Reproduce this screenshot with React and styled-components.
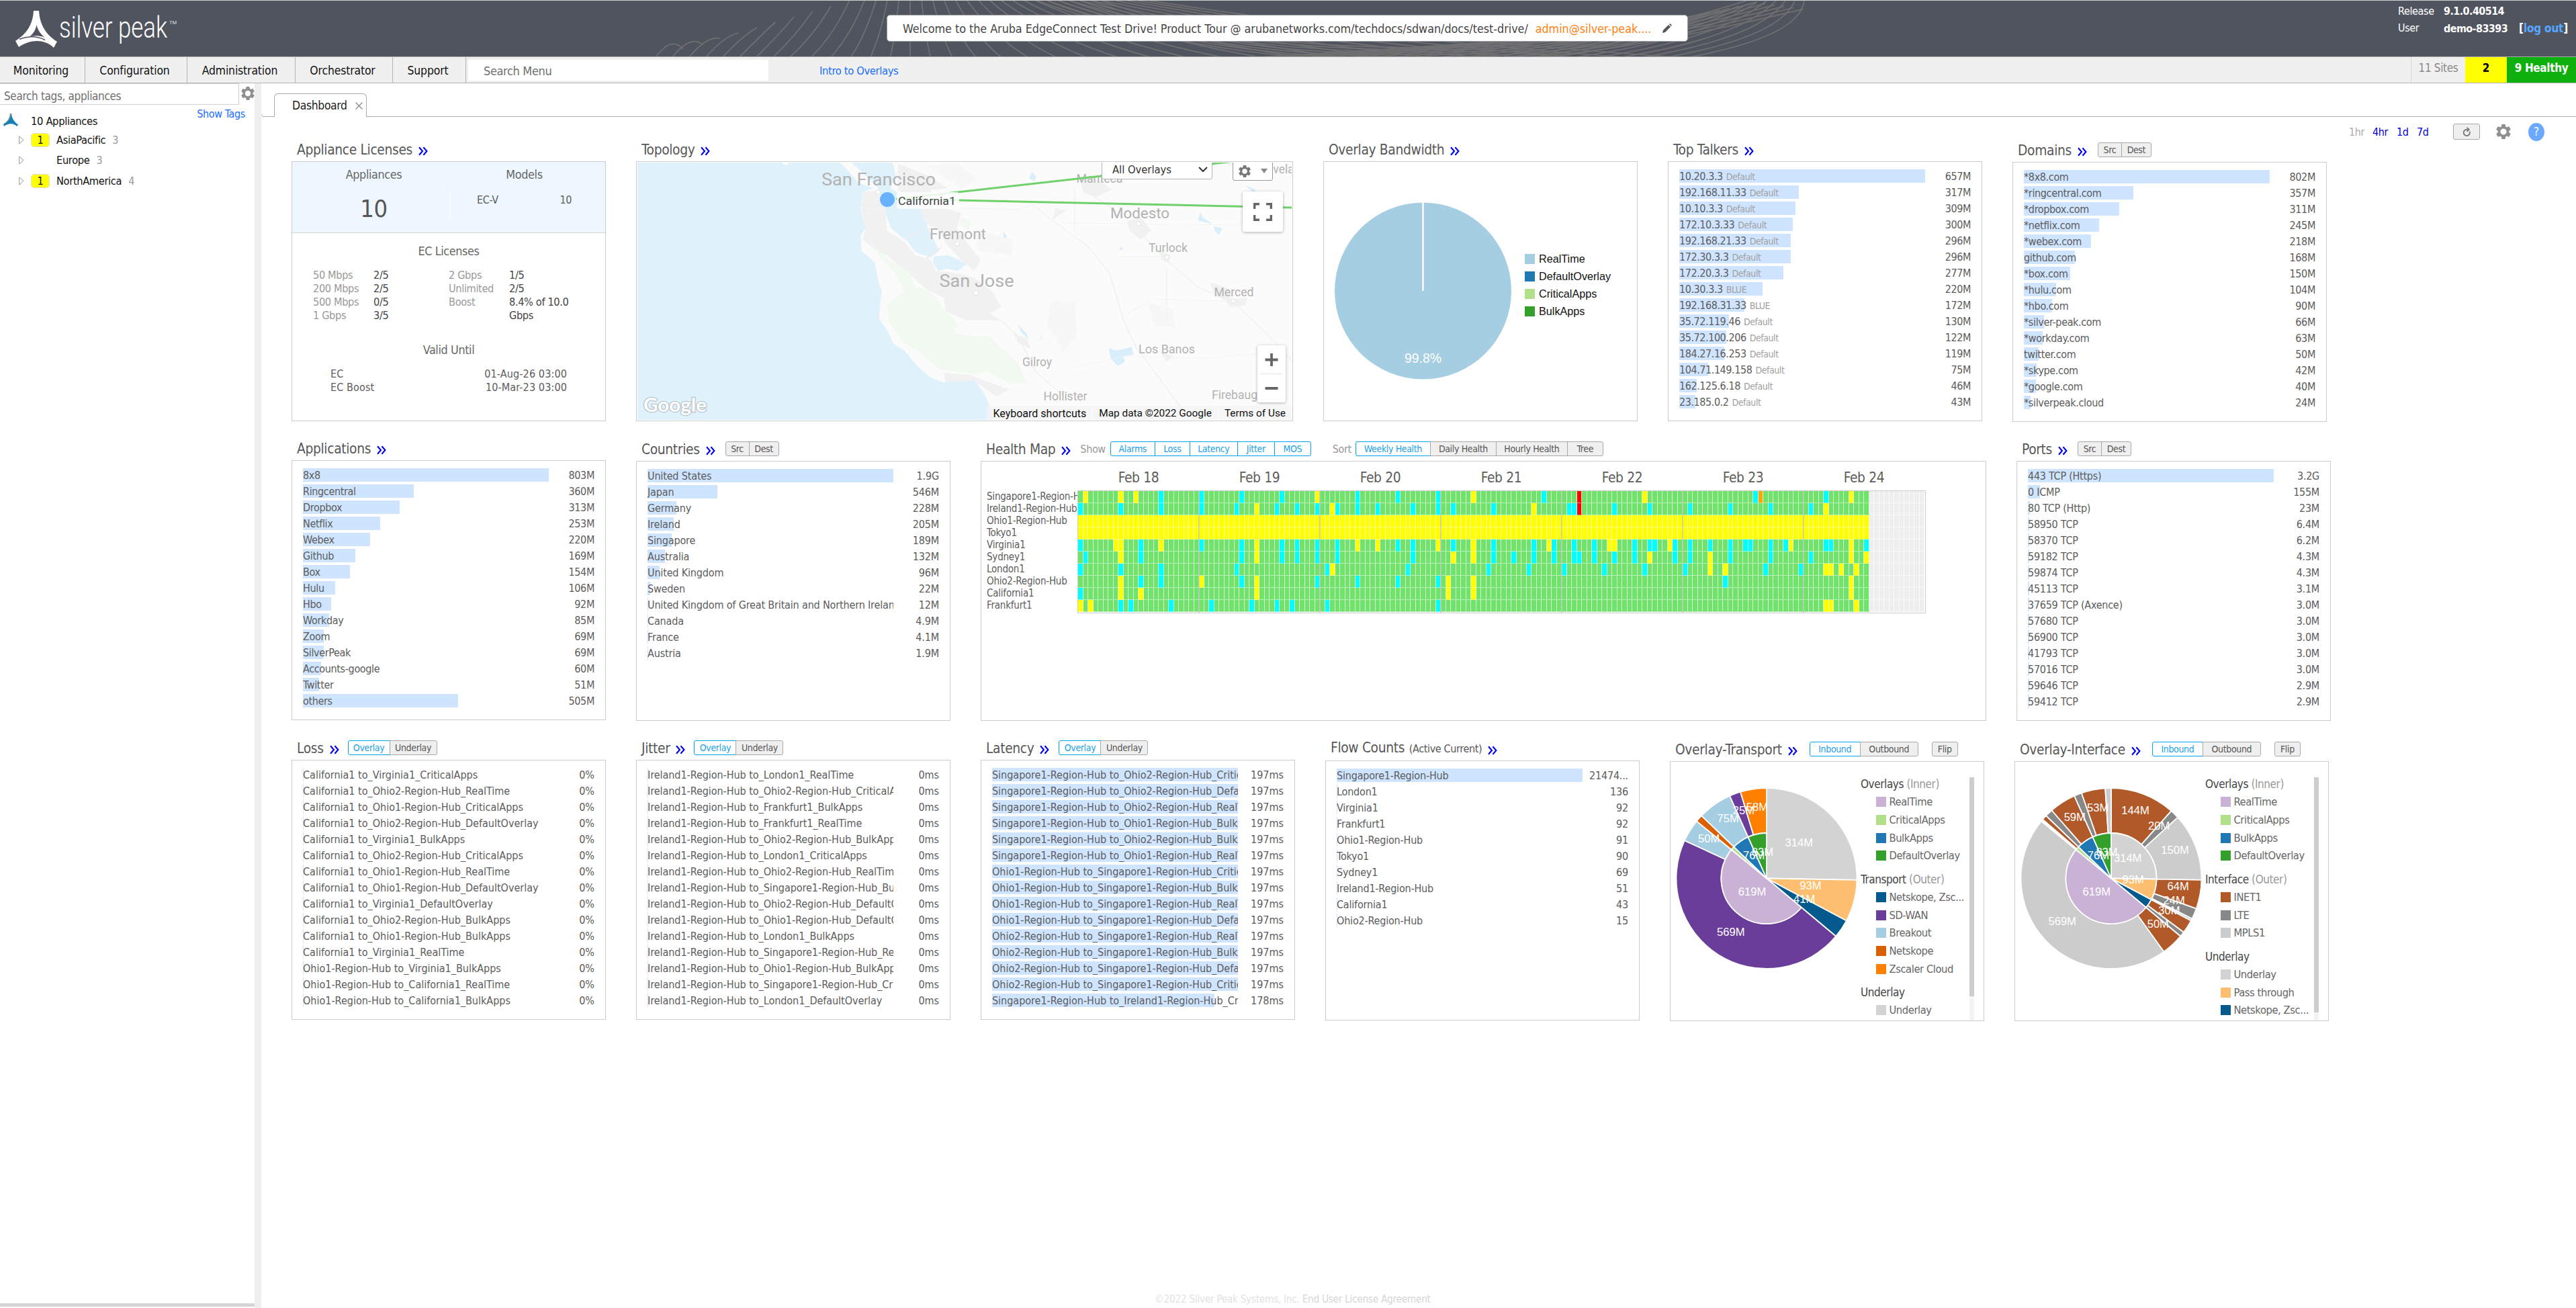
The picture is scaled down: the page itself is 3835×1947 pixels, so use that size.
import React from "react";
import styled, { createGlobalStyle, css } from "styled-components";

const ui = `"DejaVu Sans Condensed", "DejaVu Sans", sans-serif`;
const arial = `"Liberation Sans", Arial, sans-serif`;
const roboto = `Roboto, "Liberation Sans", sans-serif`;

const GlobalStyle = createGlobalStyle`
  * { box-sizing: border-box; }
  html, body { margin: 0; padding: 0; background: #fff; }
  body {
    font-family: ${ui};
    font-stretch: condensed;
    font-size: 16px;
    letter-spacing: -0.022em;
    color: #5c5c5c;
    overflow: hidden;
  }
  svg text { font-stretch: normal; letter-spacing: 0; }
`;

const Page = styled.div`
  width: 3835px;
  height: 1947px;
  display: flex;
  flex-direction: column;
  overflow: hidden;
`;

/* ---------- header ---------- */
const Header = styled.header`
  flex: none;
  height: 85px;
  position: relative;
  display: flex;
  justify-content: space-between;
  background: #50545f;
  border-top: 1px solid #cdd5d2;
  border-bottom: 1px solid #a9a9a9;
`;
const Mesh = styled.svg`
  position: absolute;
  left: 960px;
  top: 0;
`;
const LogoArea = styled.div`
  width: 1320px;
  padding: 14px 0 0 22px;
`;
const Banner = styled.div`
  position: relative;
  width: 1193px;
  height: 40px;
  margin-top: 21px;
  padding: 0 23px;
  display: flex;
  align-items: center;
  background: #fff;
  border: 1px solid #9a9da3;
  border-radius: 5px;
  color: #444;
  font-size: 17.8px;
  letter-spacing: -0.03px;
  white-space: nowrap;
`;
const BannerText = styled.span`
  width: 945px;
`;
const BannerMail = styled.span`
  color: #ff7f11;
  width: 190px;
  font-size: 17.8px;
`;
const Account = styled.div`
  width: 1322px;
  padding: 3px 0 0 1057px;
  display: grid;
  grid-template-columns: 68px 1fr;
  grid-auto-rows: 25px;
  align-items: center;
  align-content: start;
  color: #fff;
  white-space: nowrap;
`;
const Strong = styled.b`
  letter-spacing: -0.037em;
  a { color: #56a7ff; }
  span { margin-left: 17px; font-size: 17px; letter-spacing: -0.012em; }
`;

/* ---------- nav ---------- */
const Nav = styled.nav`
  flex: none;
  height: 39px;
  display: flex;
  background: #f0f0f0;
  border-bottom: 1px solid #b4b4b4;
  color: #111;
`;
const NavItem = styled.div`
  width: ${(p) => p.$w}px;
  padding: 2px 4px 0 0;
  display: flex;
  align-items: center;
  justify-content: center;
  border-right: 1px solid #b4b4b4;
  font-size: 17.4px;
  letter-spacing: -0.008em;
`;
const NavSearch = styled.div`
  width: 447px;
  height: 31px;
  margin: 4px 0 0 3px;
  padding: 2px 0 0 23px;
  display: flex;
  align-items: center;
  background: #fff;
  border-radius: 2px;
  color: #707070;
  font-size: 18px;
`;
const NavLink = styled.a`
  margin-left: 76px;
  line-height: 41px;
  color: #1a6dff;
  font-size: 16.4px;
`;
const NavFill = styled.div`
  flex: 1;
`;
const SiteBox = styled.div`
  width: ${(p) => p.$w}px;
  padding-bottom: 6px;
  display: flex;
  align-items: center;
  justify-content: center;
  background: ${(p) => p.$bg || "transparent"};
  color: ${(p) => p.$fg};
  font-size: 17px;
  font-weight: ${(p) => (p.$bold ? 700 : 400)};
  border-left: ${(p) => (p.$line ? "1px solid #d6d6d6" : "none")};
  white-space: nowrap;
`;

/* ---------- sidebar ---------- */
const Body = styled.div`
  flex: 1;
  display: flex;
  min-height: 0;
`;
const Sidebar = styled.aside`
  width: 379px;
  display: flex;
  flex-direction: column;
`;
const SideSearch = styled.div`
  height: 32px;
  display: flex;
  justify-content: space-between;
  color: #707070;
  font-size: 17px;
  svg { margin-top: 5px; }
`;
const SideInput = styled.div`
  width: 356px;
  padding: 5px 0 0 6px;
  border: solid #d0d0d0;
  border-width: 1px 1px 1px 0;
  display: flex;
  align-items: center;
`;
const ShowTags = styled.a`
  height: 20px;
  padding: 4px 14px 0 0;
  text-align: right;
  color: #1a6dff;
  font-size: 16px;
`;
const TreeRoot = styled.div`
  height: 26px;
  margin-top: -9px;
  padding-left: 5px;
  display: flex;
  align-items: center;
  color: #111;
  font-size: 16.4px;
  svg { margin: -4px 19px 0 0; }
`;
const TreeRow = styled.div`
  height: 30.5px;
  padding-left: 28px;
  display: flex;
  align-items: center;
  color: #111;
  font-size: 16.3px;
  svg { margin-right: 10px; }
  small { margin-left: 10px; font-size: 16px; color: #999; }
`;
const TreeBadge = styled.span`
  width: 28px;
  height: 21px;
  margin-right: 10px;
  display: flex;
  align-items: center;
  justify-content: center;
  border-radius: 5px;
  border: ${(p) => (p.$on ? "1px solid #ddd" : "none")};
  background: ${(p) => (p.$on ? "#ff0" : "transparent")};
`;
const SideScroll = styled.div`
  width: 379px;
  height: 5px;
  margin-top: auto;
  margin-bottom: 2px;
  background: #d4d4d4;
`;
const Splitter = styled.div`
  width: 10px;
  background: #eeeeee;
`;

/* ---------- main ---------- */
const Main = styled.main`
  flex: 1;
  display: flex;
  flex-direction: column;
  background: #fff;
`;
const TabStrip = styled.div`
  height: 50px;
  display: flex;
  align-items: flex-end;
`;
const TabLead = styled.div`
  width: 19px;
  height: 4px;
  border-bottom: 1px solid #aaa;
  border-left: 1px solid #ccc;
  border-bottom-left-radius: 4px;
`;
const Tab = styled.div`
  width: 138px;
  height: 35px;
  padding: 0 5px 0 26px;
  display: flex;
  align-items: center;
  justify-content: space-between;
  border: 1px solid #aaa;
  border-bottom: none;
  border-radius: 6px 6px 0 0;
  color: #222;
  font-size: 17.4px;
`;
const TabRest = styled.div`
  flex: 1;
  border-bottom: 1px solid #aaa;
`;
const Board = styled.div`
  flex: 1;
  display: flex;
`;
const Rows = styled.div`
  width: 3108px;
  padding: 26px 0 0 45px;
`;
const Row = styled.section`
  height: ${(p) => p.$h}px;
  display: flex;
  gap: 45px;
`;
const Tools = styled.div`
  height: 28px;
  margin-top: 8px;
  display: flex;
  align-items: center;
`;
const Range = styled.a`
  width: ${(p) => p.$w}px;
  color: ${(p) => (p.$off ? "#aaa" : "#0000e6")};
`;
const RefreshBtn = styled.div`
  width: 40px;
  height: 24px;
  margin: 0 24px 0 25px;
  display: flex;
  align-items: center;
  justify-content: center;
  background: #efefef;
  border: 1px solid #a9a9a9;
  border-radius: 3px;
`;
const Help = styled.div`
  width: 24px;
  height: 27px;
  margin-left: 26px;
  border-radius: 50%;
  background: #6aa9ff;
  color: #fff;
  font-size: 17px;
  line-height: 26px;
  text-align: center;
`;
const Footer = styled.footer`
  height: 26px;
  padding: 4px 0 0 1330px;
  color: #e2e2e2;
  font-size: 15.4px;
  span { color: #d6d6d6; }
`;

/* ---------- widget ---------- */
const WidgetBox = styled.div`
  width: ${(p) => p.$w}px;
  display: flex;
  flex-direction: column;
`;
const WidgetHead = styled.div`
  flex: none;
  height: ${(p) => p.$h}px;
  padding: 0 0 7px ${(p) => p.$pl}px;
  display: flex;
  align-items: flex-end;
  white-space: nowrap;
`;
const Title = styled.h2`
  margin: 0 0 -2px;
  font-size: 20.8px;
  font-weight: 400;
  line-height: 24px;
  color: #585858;
  small { font-size: 16px; margin-left: 1px; }
`;
const Chevron = styled.svg`
  margin: 0 0 1px 9px;
`;
const Panel = styled.div`
  height: 387px;
  border: 1px solid #ccc;
  background: #fff;
  overflow: hidden;
  position: relative;
`;
const Group = styled.div`
  display: flex;
  margin-left: ${(p) => p.$ml}px;
`;
const blue = css`
  background: #fff;
  border-color: #00a4ef;
  color: #1a9fe8;
`;
const Btn = styled.div`
  width: ${(p) => p.$w}px;
  height: 22px;
  display: flex;
  align-items: center;
  justify-content: center;
  padding-bottom: 1px;
  background: #efefef;
  border: 1px solid #a9a9a9;
  color: #555;
  font-size: 14px;
  & + & { margin-left: -1px; }
  &:first-child { border-top-left-radius: 3px; border-bottom-left-radius: 3px; }
  &:last-child { border-top-right-radius: 3px; border-bottom-right-radius: 3px; }
  ${(p) => p.$on && blue}
`;
const Hint = styled.span`
  margin-left: ${(p) => p.$ml}px;
  color: #999;
  line-height: 20px;
`;

const Bars = styled.div`
  padding: 11px 16px 0;
  letter-spacing: ${(p) => p.$ls}em;
`;
const BarRow = styled.div`
  height: 24px;
  display: flex;
  justify-content: space-between;
  line-height: 21px;
  white-space: nowrap;
`;
const BarName = styled.div`
  width: 366px;
  height: 20px;
  overflow: hidden;
  background: linear-gradient(#cfe4ff, #cfe4ff) 0 0 / ${(p) => p.$bar}px 100% no-repeat;
  small { font-size: 14px; color: #a0a0a0; margin-left: 5px; }
`;

function Widget({ w = 468, h = 40, pl = 8, title, extra, children }) {
  return (
    <WidgetBox $w={w}>
      <WidgetHead $h={h} $pl={pl}>
        <Title>{title}</Title>
        <Chevron width="14" height="14" viewBox="0 0 14 14" fill="none" stroke="#0000f0" strokeWidth="2.1">
          <path d="M1 1.2 L6 7 L1 12.8 M7.4 1.2 L12.4 7 L7.4 12.8" />
        </Chevron>
        {extra}
      </WidgetHead>
      <Panel>{children}</Panel>
    </WidgetBox>
  );
}

function BarList({ rows, ls = -0.022 }) {
  return (
    <Bars $ls={ls}>
      {rows.map(([name, value, bar, tag], i) => (
        <BarRow key={i}>
          <BarName $bar={bar}>
            {name}
            {tag && <small>{tag}</small>}
          </BarName>
          <span>{value}</span>
        </BarRow>
      ))}
    </Bars>
  );
}

function Buttons({ ml, items, on = [] }) {
  return (
    <Group $ml={ml}>
      {items.map(([label, w], i) => (
        <Btn key={label} $w={w} $on={on.includes(i)}>
          {label}
        </Btn>
      ))}
    </Group>
  );
}

/* ---------- icons ---------- */
function Gear({ size = 20, color = "#8f8f8f" }) {
  return (
    <svg width={size} height={size} viewBox="2 2 20 20" fill={color}>
      <path d="M19.43 12.98c.04-.32.07-.64.07-.98s-.03-.66-.07-.98l2.11-1.65c.19-.15.24-.42.12-.64l-2-3.46c-.12-.22-.39-.3-.61-.22l-2.49 1c-.52-.4-1.08-.73-1.69-.98l-.38-2.65C14.46 2.18 14.25 2 14 2h-4c-.25 0-.46.18-.49.42l-.38 2.65c-.61.25-1.17.59-1.69.98l-2.49-1c-.23-.09-.49 0-.61.22l-2 3.46c-.13.22-.07.49.12.64l2.11 1.65c-.04.32-.07.65-.07.98s.03.66.07.98l-2.11 1.65c-.19.15-.24.42-.12.64l2 3.46c.12.22.39.3.61.22l2.49-1c.52.4 1.08.73 1.69.98l.38 2.65c.03.24.24.42.49.42h4c.25 0 .46-.18.49-.42l.38-2.65c.61-.25 1.17-.59 1.69-.98l2.49 1c.23.09.49 0 .61-.22l2-3.46c.12-.22.07-.49-.12-.64l-2.11-1.65zM12 16.2a4.2 4.2 0 1 1 0-8.400 4.200 4.200 0 0 1 0 8.400z" />
    </svg>
  );
}

function Logo() {
  return (
    <svg width="250" height="62" viewBox="22 15 250 62">
      <path d="M50 16 H58 C59 34 66 50 85 62 L80 71 C66 58 46 58 28 70 L23 61 C40 50 49 36 50 16Z" fill="#fff" />
      <path d="M54.500 37 C53 45 49 51 43 55.500 C51 52.500 59 52.500 67 56 C60 50.500 56 44 54.500 37Z" fill="#50545f" />
      <path d="M29 58.500 C42 53.500 56 54 67 59.500" fill="none" stroke="#50545f" strokeWidth="1.400" />
      <text x="88" y="56" fontFamily={roboto} fontWeight="300" fontSize="44" fill="#fff" textLength="161" lengthAdjust="spacingAndGlyphs">
        silver peak
      </text>
      <text x="252" y="36" fontFamily={roboto} fontSize="7.500" fill="#ddd">TM</text>
    </svg>
  );
}

function HeaderMesh() {
  const lines = [];
  for (let i = 0; i < 36; i++) {
    const tx = i <= 9 ? 57 + 27.5 * i : 310 + (i - 9) * 17;
    const ty = Math.max(0, 72 - 8 * i);
    const k = i - 14;
    const bx = i <= 8 ? 16 + 25 * i : i <= 14 ? 218 + (i - 8) * 29.5 : 395 + 29 * k + 1.2 * k * k;
    lines.push(<path key={"a" + i} d={`M${tx} ${ty} Q${tx + (bx - tx) * 0.42} 52 ${bx} 84`} />);
  }
  for (let k = 0; k < 20; k++) {
    lines.push(<path key={"b" + k} d={`M${910 + 34 * k} 84 Q${1150 + 30 * k} ${72 - k} ${1460 + 14 * k} ${Math.max(0, 44 - 3 * k)}`} />);
  }
  for (let k = 0; k < 7; k++) {
    const d = k * 3.5;
    lines.push(<path key={"c" + k} d={`M${680 - k * 16} 0 C${840 - k * 6} ${58 + d} 990 ${69 + d} 1164 ${70 + d} C1340 ${70 + d} 1490 ${48 + d} ${1640 + k * 14} ${d * 0.6}`} />);
  }
  return (
    <Mesh width="1760" height="83" viewBox="0 0 1760 83" fill="none" stroke="#7b7a78" strokeWidth="1.7" opacity="0.75">
      {lines}
    </Mesh>
  );
}

/* ---------- licences ---------- */
const LicTop = styled.div`
  height: 106px;
  display: grid;
  grid-template-columns: 234px 1fr;
  background: #eef7ff;
  border-bottom: 1px solid #d5d5d5;
`;
const LicCol = styled.div`
  display: flex;
  flex-direction: column;
  align-items: center;
  padding-top: 9px;
  padding-left: ${(p) => p.$pl || 0}px;
`;
const LicHead = styled.div`
  font-size: 17.8px;
  line-height: 20px;
  text-align: center;
  color: #666;
  margin-top: ${(p) => p.$mt || 0}px;
  margin-right: ${(p) => p.$mr || 0}px;
`;
const LicBig = styled.div`
  margin-top: 19px;
  font-size: 36px;
  line-height: 44px;
  color: #555;
`;
const LicModel = styled.div`
  width: 232px;
  height: 46px;
  margin-top: 14px;
  padding: 0 50px 0 40px;
  display: flex;
  justify-content: space-between;
  line-height: 27px;
  border-left: 1px solid #fff;
`;
const LicGrid = styled.div`
  display: grid;
  grid-template-columns: 90px 112px 90px 130px;
  grid-auto-rows: 20px;
  margin: 16px 0 0 31px;
  line-height: 20px;
  color: #999;
  font-size: 16.2px;
  white-space: nowrap;
  b { font-weight: 400; color: #444; }
`;
const LicDates = styled.div`
  margin: 16px 57px 0;
  line-height: 20px;
`;
const LicDate = styled.div`
  display: flex;
  justify-content: space-between;
  letter-spacing: 0.008em;
`;

function Licenses() {
  return (
    <>
      <LicTop>
        <LicCol $pl={9}>
          <LicHead>Appliances</LicHead>
          <LicBig>10</LicBig>
        </LicCol>
        <LicCol>
          <LicHead $mr={9}>Models</LicHead>
          <LicModel>
            <span>EC-V</span>
            <span>10</span>
          </LicModel>
        </LicCol>
      </LicTop>
      <LicHead $mt={17}>EC Licenses</LicHead>
      <LicGrid>
        <span>50 Mbps</span><b>2/5</b><span>2 Gbps</span><b>1/5</b>
        <span>200 Mbps</span><b>2/5</b><span>Unlimited</span><b>2/5</b>
        <span>500 Mbps</span><b>0/5</b><span>Boost</span><b>8.4% of 10.0</b>
        <span>1 Gbps</span><b>3/5</b><span /><b>Gbps</b>
      </LicGrid>
      <LicHead $mt={31}>Valid Until</LicHead>
      <LicDates>
        <LicDate><span>EC</span><span>01-Aug-26 03:00</span></LicDate>
        <LicDate><span>EC Boost</span><span>10-Mar-23 03:00</span></LicDate>
      </LicDates>
    </>
  );
}

/* ---------- map ---------- */
const MapBox = styled.div`
  position: absolute;
  inset: 1px;
  overflow: hidden;
  letter-spacing: 0;
  font-family: ${roboto};
  font-stretch: normal;
`;
const MapSelect = styled.div`
  position: absolute;
  left: 691px;
  top: -4px;
  width: 165px;
  height: 29px;
  padding: 0 6px 0 15px;
  display: flex;
  align-items: center;
  justify-content: space-between;
  background: #fff;
  border: 1px solid #b5b5b5;
  border-radius: 3px;
  color: #333;
  font-family: ${ui};
  font-stretch: condensed;
  font-size: 16.4px;
`;
const MapGear = styled.div`
  position: absolute;
  left: 886px;
  top: -4px;
  width: 60px;
  height: 31px;
  padding: 2px 7px 0 8px;
  display: flex;
  align-items: center;
  justify-content: space-between;
  background: #fff;
  border: 1px solid #999;
  border-radius: 3px;
`;
const MapFull = styled.div`
  position: absolute;
  left: 901px;
  top: 43px;
  width: 60px;
  height: 60px;
  display: flex;
  align-items: center;
  justify-content: center;
  background: #fff;
  border-radius: 3px;
  box-shadow: 0 1px 4px rgba(0, 0, 0, 0.3);
`;
const MapZoom = styled.div`
  position: absolute;
  left: 923px;
  top: 272px;
  width: 42px;
  height: 85px;
  background: #fff;
  border-radius: 3px;
  box-shadow: 0 1px 4px rgba(0, 0, 0, 0.3);
`;
const MapLegal = styled.div`
  position: absolute;
  right: 0;
  bottom: 0;
  height: 21px;
  display: flex;
  gap: 1px;
  font-size: 15.4px;
  line-height: 23px;
  color: #111;
  span { background: rgba(245, 245, 245, 0.85); padding: 0 9px; white-space: nowrap; }
  span:first-child { font-size: 16px; }
`;

const CITIES = [
  ["San Francisco", 359, 34, 26, 170],
  ["San Jose", 505, 185, 26, 111],
  ["Fremont", 477, 114, 21.5, 84],
  ["Modesto", 748, 83, 21.5, 88],
  ["Turlock", 790, 133, 18, 58],
  ["Merced", 888, 199, 18, 59],
  ["Los Banos", 788, 284, 18, 84],
  ["Gilroy", 595, 303, 18, 44],
  ["Hollister", 637, 354, 18, 65],
  ["Firebaug", 889, 352, 18, 68],
  ["Manteca", 688, 30, 18, 69],
  ["vela", 962, 16, 18, 31],
];

function TopologyMap() {
  return (
    <MapBox>
      <svg width="977" height="383" viewBox="0 0 977 383">
        <rect width="977" height="383" fill="#fbfbfb" />
        <g transform="translate(-19 -42) scale(0.6505 0.33333)">
          <path fill="#dff1fb" d="M20 120 L490 120 L515 170 L535 215 L570 240 L545 255 L540 340 L552 420 L540 450 L542 520 L572 570 L580 650 L588 700 L582 820 L605 890 L615 935 L640 965 L670 1035 L700 1085 L730 1108 L780 1080 L800 1095 L820 1150 L838 1220 L842 1290 L20 1290Z" />
          <path fill="#dff1fb" d="M515 120 L612 120 L620 180 L608 240 L650 290 L690 350 L692 410 L720 520 L700 550 L665 525 L648 480 L610 420 L592 330 L580 240 L555 190Z" />
          <path fill="#dff1fb" d="M708 545 L740 540 L765 560 L782 580 L762 610 L738 600 L718 610 L705 575Z" />
          <path fill="#f1f1f1" d="M545 255 L580 250 L596 330 L600 430 L640 480 L665 540 L700 560 L712 610 L760 620 L800 640 L840 700 L862 770 L835 800 L860 830 L780 830 L735 790 L730 730 L690 690 L650 620 L600 540 L575 520 L545 470 L552 420 L542 340Z" />
          <path fill="#f1f1f1" d="M625 130 L690 180 L740 240 L700 250 L730 330 L770 350 L760 420 L790 500 L815 560 L800 610 L770 560 L740 500 L720 430 L690 400 L670 300 L625 250Z" />
          <path fill="#f1f1f1" d="M1040 190 L1080 200 L1115 245 L1080 280 L1050 260Z M1150 390 L1180 370 L1205 430 L1180 470 L1155 430Z M1225 520 L1250 540 L1245 575 L1228 560Z M1375 740 L1425 730 L1420 765 L1385 770Z M1340 660 L1385 690 L1390 750 L1350 720Z M890 890 L920 910 L930 960 L900 930Z M1225 970 L1255 990 L1240 1015Z M730 1065 L790 1075 L880 1140 L850 1170 L800 1100 L735 1105Z M985 330 L1010 340 L980 380Z" />
          <path fill="#f7f7f7" d="M975 740 L1030 750 L1035 900 L1000 980 L985 900 L965 860Z M1195 750 L1255 780 L1260 860 L1215 860Z M690 140 L760 130 L810 200 L770 240Z M800 420 L890 470 L885 540 L810 520Z" />
          <path fill="#f1f9f1" d="M560 480 L605 560 L650 610 L665 680 L700 700 L730 780 L760 840 L755 890 L800 900 L835 900 L860 950 L900 1020 L920 1110 L880 1110 L830 1060 L800 1070 L720 1050 L680 980 L640 930 L605 840 L600 760 L640 700 L620 620 L590 560Z M770 370 L795 390 L785 430 L765 400Z M940 930 L960 880 L955 920Z" />
          <g fill="#cfebfb" opacity="0.8">
            <path d="M1108 955 L1125 965 L1160 950 L1165 985 L1140 990 L1145 1015 L1128 1035 L1112 1000Z" />
            <path d="M900 850 L920 890 L925 915 L908 885Z M932 165 L942 190 L938 210 L926 195Z M1420 225 L1445 250 L1440 262Z M1318 345 L1322 370 L1345 400 L1312 385Z M1348 410 L1368 420 L1360 450 L1350 430Z M1135 500 L1143 515 L1132 515Z M865 430 L875 455 L868 465Z" />
          </g>
          <g fill="none" stroke="#f1f1f1" strokeWidth="3">
            <path d="M860 290 L930 310 L1010 430 L1060 500 L1110 620 L1140 820 L1170 950 L1275 1225" />
            <path d="M1055 250 L1150 380 L1240 560 L1310 680 L1400 760 L1490 930 L1530 1020" />
            <path d="M780 820 L860 830 L900 900 L940 1060 L1000 1160" />
            <path d="M625 320 L900 335 L1000 280 M1000 395 L1400 405 L1530 300 M1130 545 L1240 545 M1150 800 L1210 735 L1380 745 M1030 250 L1030 430 M1240 600 L1240 840 M1010 1050 L1150 990 L1330 1000 L1450 980" strokeWidth="2" />
            <path d="M640 465 L700 420 M690 555 L725 505 M540 315 L620 318" stroke="#ededed" strokeWidth="4" />
          </g>
          <path d="M362 126h12v8h-12z" fill="#fff" />
        </g>
        <g fill="#fff" stroke="#e3e3e3">
          <circle cx="358" cy="44" r="3.4" /><circle cx="476" cy="121" r="3.4" /><circle cx="504" cy="194" r="3.8" />
          <circle cx="746" cy="91" r="3" /><circle cx="788" cy="141" r="3" /><circle cx="887" cy="206" r="3" />
        </g>
        <g fontFamily={roboto} fontWeight="400" fill="#b2b2b2" textAnchor="middle">
          {CITIES.map(([name, x, y, size, len]) => (
            <text key={name} x={x} y={y} fontSize={size} textLength={len} lengthAdjust="spacingAndGlyphs">
              {name}
            </text>
          ))}
        </g>
        <g stroke="#6fd16b" strokeWidth="3" fill="none">
          <path d="M388 54 L691 20 L890 -2" />
          <path d="M385 54 L977 67" />
        </g>
        <rect x="386" y="44" width="93" height="25" rx="4" fill="#fff" fillOpacity="0.85" />
        <circle cx="372" cy="55" r="11" fill="#66b2ff" />
        <text x="388" y="63" fontFamily={roboto} fontSize="17" fill="#444" textLength="86" lengthAdjust="spacingAndGlyphs">
          California1
        </text>
        <g fontFamily={`Lato, ${roboto}`} fontSize="28" fontWeight="700" stroke="#b9c4ca" strokeWidth="2.4" paintOrder="stroke" fill="#fff">
          <text x="9" y="371" textLength="94" lengthAdjust="spacingAndGlyphs">Google</text>
        </g>
      </svg>
      <MapSelect>
        <span>All Overlays</span>
        <svg width="14" height="9" viewBox="0 0 14 9" fill="none" stroke="#333" strokeWidth="2"><path d="M1 1 L7 7 L13 1" /></svg>
      </MapSelect>
      <MapGear>
        <Gear size={18} color="#777" />
        <svg width="10" height="7" viewBox="0 0 10 7"><path d="M0 0H10L5 7Z" fill="#888" /></svg>
      </MapGear>
      <MapFull>
        <svg width="28" height="27" viewBox="0 0 28 27" fill="none" stroke="#666" strokeWidth="3.4"><path d="M1.7 9V1.7H9 M19 1.7H26.3V9 M26.3 18V25.3H19 M9 25.3H1.7V18" /></svg>
      </MapFull>
      <MapZoom>
        <svg width="42" height="85" viewBox="0 0 42 85">
          <path d="M11.500 21.500H30.500M21 12V31M11.500 64H30.500" stroke="#666" strokeWidth="3.800" />
          <path d="M5 42.500H37" stroke="#e6e6e6" strokeWidth="1" />
        </svg>
      </MapZoom>
      <MapLegal>
        <span>Keyboard shortcuts</span>
        <span>Map data ©2022 Google</span>
        <span>Terms of Use</span>
      </MapLegal>
    </MapBox>
  );
}

/* ---------- pies ---------- */
function slice(cx, cy, r0, r1, a0, a1) {
  const p = (r, a) => `${(cx + r * Math.sin(a)).toFixed(2)} ${(cy - r * Math.cos(a)).toFixed(2)}`;
  const big = a1 - a0 > Math.PI ? 1 : 0;
  if (r0 === 0) return `M${cx} ${cy} L${p(r1, a0)} A${r1} ${r1} 0 ${big} 1 ${p(r1, a1)} Z`;
  return `M${p(r0, a0)} L${p(r1, a0)} A${r1} ${r1} 0 ${big} 1 ${p(r1, a1)} L${p(r0, a1)} A${r0} ${r0} 0 ${big} 0 ${p(r0, a0)} Z`;
}
function Ring({ cx, cy, r0, r1, data }) {
  const total = data.reduce((s, d) => s + d[0], 0);
  let a = 0;
  return data.map(([v, color, from], i) => {
    const a0 = a;
    a += (v / total) * Math.PI * 2;
    if (!color) return null;
    return <path key={i} d={slice(cx, cy, from ?? r0, r1, a0, a)} fill={color} stroke="#fff" strokeWidth="1.8" strokeLinejoin="round" />;
  });
}

const PieLayout = styled.div`
  height: 385px;
  display: flex;
`;
const PieLegend = styled.div`
  padding: ${(p) => p.$pt}px 0 0 0;
  font-family: ${arial};
  font-stretch: normal;
  font-size: 16.2px;
  letter-spacing: 0;
  color: #111;
`;
const Key = styled.div`
  height: ${(p) => p.$h || 26}px;
  display: flex;
  align-items: center;
  padding-left: ${(p) => p.$pl || 0}px;
  white-space: nowrap;
`;
const Swatch = styled.i`
  width: 15px;
  height: 15px;
  margin-right: ${(p) => p.$mr || 6}px;
  background: ${(p) => p.$c};
`;

function BandwidthPie() {
  return (
    <PieLayout>
      <svg width="299" height="385" viewBox="0 0 299 385">
        <circle cx="147.500" cy="192" r="131.500" fill="#a6cee3" />
        <path d="M147.500 192 V60" stroke="#fff" strokeWidth="2.400" />
        <text x="147.500" y="299" textAnchor="middle" fontFamily={arial} fontSize="19.400" fill="#fff">99.8%</text>
      </svg>
      <PieLegend $pt={131}>
        {[["RealTime", "#a6cee3"], ["DefaultOverlay", "#1f78b4"], ["CriticalApps", "#b2df8a"], ["BulkApps", "#33a02c"]].map(([t, c]) => (
          <Key key={t}><Swatch $c={c} />{t}</Key>
        ))}
      </PieLegend>
    </PieLayout>
  );
}

const INNER = [
  [314, "#d3d3d3"], [93, "#fdbf6f"], [41, "#045a8d"], [619, "#cab2d6"], [16, "#b2df8a"], [76, "#1f78b4"], [83, "#33a02c"],
];
const T_OUTER = [
  [314, "#d3d3d3", 0], [93, "#fdbf6f", 0], [41, "#045a8d", 0], [569, "#6a3d9a"], [50, "#a6cee3"], [16, "#d95f02"], [76, "#a6cee3"], [25, "#6a3d9a"], [58, "#ff7f00"],
];
const I_OUTER = [
  [144, "#b15928"], [20, "#888"], [150, "#ccc"],
  [64, "#b15928"], [24, "#888"], [5, "#ccc"],
  [30, "#b15928"], [11, "#888"],
  [50, "#b15928"], [569, "#ccc"],
  [2, "#ccc"], [3, "#888"], [11, "#b15928"],
  [17, "#888"], [59, "#b15928"],
  [17, "#888"], [53, "#b15928"], [13, "#ccc"],
];
const T_LABELS = [
  ["314M", 329, 492], ["93M", 355, 685], ["41M", 341, 744], ["569M", 176, 890], ["619M", 224, 711], ["50M", 127, 474],
  ["75M", 170, 384], ["25M", 205, 348], ["58M", 235, 334], ["76M", 228, 549], ["83M", 247, 534],
];
const I_LABELS = [
  ["144M", 1084, 349], ["20M", 1137, 417], ["150M", 1173, 525], ["64M", 1180, 688], ["24M", 1171, 750], ["30M", 1160, 796],
  ["50M", 1135, 855], ["569M", 920, 843], ["619M", 997, 711], ["59M", 948, 378], ["53M", 1000, 336], ["76M", 1001, 549],
  ["83M", 1020, 534], ["314M", 1067, 562], ["93M", 1079, 657],
];

const DualLegend = styled.div`
  width: 162px;
  height: 362px;
  margin-top: 23px;
  overflow: hidden;
  font-size: 16.4px;
  letter-spacing: -0.026em;
  color: #666;
`;
const LegendHead = styled.div`
  height: 20px;
  margin: ${(p) => p.$mt}px 0 3.6px;
  line-height: 20px;
  color: #444;
  font-size: 17px;
  white-space: nowrap;
  span { color: #999; }
`;
const Scroll = styled.div`
  width: 7px;
  margin-top: 23px;
  background: linear-gradient(#cdcdcd, #cdcdcd) 0 0 / 100% ${(p) => p.$thumb}px no-repeat #f4f4f4;
`;

function DualPie({ transport, labels, offset, groups, thumb }) {
  return (
    <PieLayout>
      <svg width="283" height="385" viewBox="0 0 283 385">
        <Ring cx={143} cy={173.5} r0={67.5} r1={134.5} data={transport ? T_OUTER : I_OUTER} />
        <Ring cx={143} cy={173.5} r0={0} r1={67.5} data={transport ? INNER.map((d, i) => (i < 3 ? [d[0], null] : d)) : INNER} />
        <g fontFamily={arial} fontSize="16.6" fill="#fff" textAnchor="middle">
          {labels.map(([t, x, y], i) => (
            <text key={i} x={x / 1.5077 - offset} y={y / 3 - 38}>{t}</text>
          ))}
        </g>
      </svg>
      <DualLegend>
        {groups.map(([name, note, items], i) => (
          <div key={name}>
            <LegendHead $mt={i === 0 ? 0 : 11.5}>
              {name} {note && <span>({note})</span>}
            </LegendHead>
            {items.map(([t, c]) => (
              <Key key={t} $h={26.65} $pl={22.5}><Swatch $c={c} $mr={5} />{t}</Key>
            ))}
          </div>
        ))}
      </DualLegend>
      <Scroll $thumb={thumb} />
    </PieLayout>
  );
}

const OVERLAYS = ["Overlays", "Inner", [["RealTime", "#cab2d6"], ["CriticalApps", "#b2df8a"], ["BulkApps", "#1f78b4"], ["DefaultOverlay", "#33a02c"]]];
const T_GROUPS = [
  OVERLAYS,
  ["Transport", "Outer", [["Netskope, Zsc...", "#045a8d"], ["SD-WAN", "#6a3d9a"], ["Breakout", "#a6cee3"], ["Netskope", "#d95f02"], ["Zscaler Cloud", "#ff7f00"]]],
  ["Underlay", null, [["Underlay", "#d3d3d3"]]],
];
const I_GROUPS = [
  OVERLAYS,
  ["Interface", "Outer", [["INET1", "#b15928"], ["LTE", "#888"], ["MPLS1", "#ccc"]]],
  ["Underlay", null, [["Underlay", "#d3d3d3"], ["Pass through", "#fdbf6f"], ["Netskope, Zsc...", "#045a8d"]]],
];

/* ---------- health map ---------- */
const C = "#00ffff", Y = "#ffff00", R = "#ff0000", O = "#ffa500", G = "#70e36b";
const HEALTH = [
  ["Singapore1-Region-Hub", G, { [Y]: [1, 8, 11, 47, 78, 112, 153], [C]: [16, 24, 32, 40, 55, 63, 71, 92, 134, 148], [R]: [99], [O]: [135] }],
  ["Ireland1-Region-Hub", G, { [C]: [0, 8, 16, 24, 31, 39, 43, 47, 51, 55, 59, 66, 71, 74, 82, 97, 98, 106, 113, 121, 129, 137, 145], [Y]: [35, 50, 90, 148], [R]: [99] }],
  ["Ohio1-Region-Hub", Y, {}],
  ["Tokyo1", Y, {}],
  ["Virginia1", G, { [C]: [0, 12, 24, 32, 40, 43, 47, 51, 63, 66, 74, 82, 90, 94, 98, 102, 110, 113, 114, 118, 121, 125, 129, 132, 133, 137, 140, 148, 149, 156], [Y]: [7, 8, 16, 35, 55, 59, 71, 78, 93, 105, 106, 117, 141, 153] }],
  ["Sydney1", G, { [C]: [1, 12, 32, 40, 43, 47, 51, 66, 82, 86, 90, 94, 98, 99, 102, 106, 110, 118, 121, 129, 137, 145], [Y]: [8, 35, 74, 78, 113, 125, 153, 156] }],
  ["London1", G, { [C]: [0, 8, 16, 31, 49, 65, 81, 89, 96, 104, 112, 120, 136, 143], [Y]: [50, 125, 128, 148, 149, 151, 154] }],
  ["Ohio2-Region-Hub", G, { [C]: [12, 16, 32, 47, 55, 63, 71, 128], [Y]: [8, 24, 35, 73, 78, 153] }],
  ["California1", G, { [C]: [0], [Y]: [8, 12, 35, 73, 78, 153] }],
  ["Frankfurt1", G, { [C]: [8, 10, 18, 26, 34, 39, 42, 49, 71], [Y]: [0, 2, 148, 149, 154] }],
];

const HealthBody = styled.div`
  padding: 10px 0 0 8px;
`;
const Days = styled.div`
  margin-left: 136px;
  height: 33px;
  display: grid;
  grid-template-columns: repeat(7, 180px);
  text-align: center;
  font-size: 20.8px;
  line-height: 29px;
`;
const HealthGrid = styled.div`
  display: flex;
`;
const Names = styled.div`
  width: 135px;
  overflow: hidden;
  font-size: 15px;
  letter-spacing: -0.014em;
  line-height: 18px;
  white-space: nowrap;
`;

function HealthMap() {
  return (
    <HealthBody>
      <Days>
        {[18, 19, 20, 21, 22, 23, 24].map((d) => <div key={d}>Feb {d}</div>)}
      </Days>
      <HealthGrid>
        <Names>
          {HEALTH.map(([n]) => <div key={n}>{n}</div>)}
        </Names>
        <svg width="1264" height="184" viewBox="0 0 1264 184">
          <rect x="0.5" y="0.5" width="1262" height="182" fill="#fff" stroke="#ccc" />
          {HEALTH.map(([n, base, marks], r) => {
            const colors = Array.from({ length: 168 }, (_, i) => (i < 157 ? base : "#eeeeee"));
            Object.entries(marks).forEach(([c, list]) => list.forEach((i) => { colors[i] = c; }));
            return colors.map((c, i) => {
              const x = 1 + Math.round(i * 7.5);
              const w = 1 + Math.round((i + 1) * 7.5) - x - 1;
              return (
                <g key={r + "-" + i} fill={c}>
                  <rect x={x} y={1 + r * 18} width={w} height="17" />
                  <rect x={x} y={1 + r * 18 + 16} width={w + 1} height="2" fill={c} opacity="0.5" />
                  <rect x={x + w} y={1 + r * 18} width="1" height="16" opacity="0.25" />
                </g>
              );
            });
          })}
          {[1, 2, 3, 4, 5, 6].map((d) => <rect key={d} x={d * 180} y="1" width="1.6" height="181" fill="#c9c9c9" />)}
        </svg>
      </HealthGrid>
    </HealthBody>
  );
}

/* ---------- data ---------- */
const TALKERS = [
  ["10.20.3.3", "657M", 366, "Default"], ["192.168.11.33", "317M", 178, "Default"], ["10.10.3.3", "309M", 173, "Default"],
  ["172.10.3.33", "300M", 169, "Default"], ["192.168.21.33", "296M", 166, "Default"], ["172.30.3.3", "296M", 166, "Default"],
  ["172.20.3.3", "277M", 155, "Default"], ["10.30.3.3", "220M", 124, "BLUE"], ["192.168.31.33", "172M", 97, "BLUE"],
  ["35.72.119.46", "130M", 74, "Default"], ["35.72.100.206", "122M", 70, "Default"], ["184.27.16.253", "119M", 67, "Default"],
  ["104.71.149.158", "75M", 43, "Default"], ["162.125.6.18", "46M", 26, "Default"], ["23.185.0.2", "43M", 24, "Default"],
];
const DOMAINS = [
  ["*8x8.com", "802M", 366], ["*ringcentral.com", "357M", 163], ["*dropbox.com", "311M", 142], ["*netflix.com", "245M", 112],
  ["*webex.com", "218M", 100], ["github.com", "168M", 76], ["*box.com", "150M", 69], ["*hulu.com", "104M", 48],
  ["*hbo.com", "90M", 42], ["*silver-peak.com", "66M", 30], ["*workday.com", "63M", 28], ["twitter.com", "50M", 22],
  ["*skype.com", "42M", 19], ["*google.com", "40M", 18], ["*silverpeak.cloud", "24M", 10],
];
const APPS = [
  ["8x8", "803M", 366], ["Ringcentral", "360M", 165], ["Dropbox", "313M", 144], ["Netflix", "253M", 115], ["Webex", "220M", 100],
  ["Github", "169M", 78], ["Box", "154M", 70], ["Hulu", "106M", 48], ["Hbo", "92M", 42], ["Workday", "85M", 39], ["Zoom", "69M", 31],
  ["SilverPeak", "69M", 31], ["Accounts-google", "60M", 27], ["Twitter", "51M", 24], ["others", "505M", 231],
];
const COUNTRIES = [
  ["United States", "1.9G", 366], ["Japan", "546M", 104], ["Germany", "228M", 43], ["Ireland", "205M", 39], ["Singapore", "189M", 36],
  ["Australia", "132M", 26], ["United Kingdom", "96M", 18], ["Sweden", "22M", 4],
  ["United Kingdom of Great Britain and Northern Ireland", "12M", 1], ["Canada", "4.9M", 1], ["France", "4.1M", 1], ["Austria", "1.9M", 1],
];
const PORTS = [
  ["443 TCP (Https)", "3.2G", 366], ["0 ICMP", "155M", 18], ["80 TCP (Http)", "23M", 3], ["58950 TCP", "6.4M", 2], ["58370 TCP", "6.2M", 2],
  ["59182 TCP", "4.3M", 2], ["59874 TCP", "4.3M", 2], ["45113 TCP", "3.1M", 2], ["37659 TCP (Axence)", "3.0M", 2], ["57680 TCP", "3.0M", 2],
  ["56900 TCP", "3.0M", 2], ["41793 TCP", "3.0M", 2], ["57016 TCP", "3.0M", 2], ["59646 TCP", "2.9M", 2], ["59412 TCP", "2.9M", 2],
];
const LOSS = [
  "California1 to_Virginia1_CriticalApps", "California1 to_Ohio2-Region-Hub_RealTime", "California1 to_Ohio1-Region-Hub_CriticalApps",
  "California1 to_Ohio2-Region-Hub_DefaultOverlay", "California1 to_Virginia1_BulkApps", "California1 to_Ohio2-Region-Hub_CriticalApps",
  "California1 to_Ohio1-Region-Hub_RealTime", "California1 to_Ohio1-Region-Hub_DefaultOverlay", "California1 to_Virginia1_DefaultOverlay",
  "California1 to_Ohio2-Region-Hub_BulkApps", "California1 to_Ohio1-Region-Hub_BulkApps", "California1 to_Virginia1_RealTime",
  "Ohio1-Region-Hub to_Virginia1_BulkApps", "Ohio1-Region-Hub to_California1_RealTime", "Ohio1-Region-Hub to_California1_BulkApps",
].map((n) => [n, "0%", 1]);
const JITTER = [
  "London1_RealTime", "Ohio2-Region-Hub_CriticalApps", "Frankfurt1_BulkApps", "Frankfurt1_RealTime", "Ohio2-Region-Hub_BulkApps",
  "London1_CriticalApps", "Ohio2-Region-Hub_RealTime", "Singapore1-Region-Hub_BulkApps", "Ohio2-Region-Hub_DefaultOverlay",
  "Ohio1-Region-Hub_DefaultOverlay", "London1_BulkApps", "Singapore1-Region-Hub_RealTime", "Ohio1-Region-Hub_BulkApps",
  "Singapore1-Region-Hub_CriticalApps", "London1_DefaultOverlay",
].map((n) => ["Ireland1-Region-Hub to_" + n, "0ms", 1]);
const SG = "Singapore1-Region-Hub", O1 = "Ohio1-Region-Hub", O2 = "Ohio2-Region-Hub";
const LATENCY = [
  [SG, O2, "CriticalApps"], [SG, O2, "DefaultOverlay"], [SG, O2, "RealTime"], [SG, O1, "BulkApps"], [SG, O2, "BulkApps"], [SG, O1, "RealTime"],
  [O1, SG, "CriticalApps"], [O1, SG, "BulkApps"], [O1, SG, "RealTime"], [O1, SG, "DefaultOverlay"],
  [O2, SG, "RealTime"], [O2, SG, "BulkApps"], [O2, SG, "DefaultOverlay"], [O2, SG, "CriticalApps"], [SG, "Ireland1-Region-Hub", "CriticalApps"],
].map(([a, b, c], i) => [`${a} to_${b}_${c}`, i === 14 ? "178ms" : "197ms", i === 14 ? 331 : 366]);
const FLOWS = [
  [SG, "21474...", 366], ["London1", "136", 1], ["Virginia1", "92", 1], ["Frankfurt1", "92", 1], [O1, "91", 1], ["Tokyo1", "90", 1],
  ["Sydney1", "69", 1], ["Ireland1-Region-Hub", "51", 1], ["California1", "43", 1], [O2, "15", 1],
];

const SRC = [["Src", 36], ["Dest", 45]];
const OV = [["Overlay", 63], ["Underlay", 71]];
const IO = [["Inbound", 76], ["Outbound", 87]];

export default function App() {
  return (
    <Page>
      <GlobalStyle />
      <Header>
        <HeaderMesh />
        <LogoArea><Logo /></LogoArea>
        <Banner>
          <BannerText>Welcome to the Aruba EdgeConnect Test Drive! Product Tour @ arubanetworks.com/techdocs/sdwan/docs/test-drive/</BannerText>
          <BannerMail>admin@silver-peak....</BannerMail>
          <svg width="14" height="14" viewBox="0 0 14 14" fill="#555"><path d="M0 14 L1 10 L9 2 L12 5 L4 13Z M10 1.200 L11.200 0 L14 2.800 L12.800 4Z" /></svg>
        </Banner>
        <Account>
          <span>Release</span><Strong>9.1.0.40514</Strong>
          <span>User</span><Strong>demo-83393<span>[<a>log out</a>]</span></Strong>
        </Account>
      </Header>

      <Nav>
        <NavItem $w={127}>Monitoring</NavItem>
        <NavItem $w={152}>Configuration</NavItem>
        <NavItem $w={161}>Administration</NavItem>
        <NavItem $w={145}>Orchestrator</NavItem>
        <NavItem $w={109}>Support</NavItem>
        <NavSearch>Search Menu</NavSearch>
        <NavLink>Intro to Overlays</NavLink>
        <NavFill />
        <SiteBox $w={81} $fg="#888" $line>11 Sites</SiteBox>
        <SiteBox $w={62} $fg="#000" $bg="#ffff00" $bold>2</SiteBox>
        <SiteBox $w={103} $fg="#fff" $bg="#0eb00e" $bold>9 Healthy</SiteBox>
      </Nav>

      <Body>
        <Sidebar>
          <SideSearch>
            <SideInput>Search tags, appliances</SideInput>
            <Gear size={20} />
          </SideSearch>
          <ShowTags>Show Tags</ShowTags>
          <TreeRoot>
            <svg width="22" height="19" viewBox="0 0 22 19">
              <path d="M10 0 L12 0 C12.500 7 16 12 22 17 L20 19 C15 14 8 14 1 19 L0 16 C6 12 9.500 7 10 0Z" fill="#1580b8" />
              <path d="M10 0 L11 0 C11 7 8 11 4 14 L1 15 C7 11 9.500 6 10 0Z" fill="#999" />
            </svg>
            10 Appliances
          </TreeRoot>
          {[["AsiaPacific", 3, true], ["Europe", 3, false], ["NorthAmerica", 4, true]].map(([n, c, on]) => (
            <TreeRow key={n}>
              <svg width="8" height="13" viewBox="0 0 8 13"><path d="M0.700 1 L7 6.500 L0.700 12Z" fill="#fff" stroke="#999" /></svg>
              <TreeBadge $on={on}>{on ? 1 : ""}</TreeBadge>
              {n}<small>{c}</small>
            </TreeRow>
          ))}
          <SideScroll />
        </Sidebar>
        <Splitter />
        <Main>
          <TabStrip>
            <TabLead />
            <Tab>
              Dashboard
              <svg width="11" height="11" viewBox="0 0 11 11" stroke="#888" strokeWidth="1.300"><path d="M0.500 0.500 L10.500 10.500 M10.500 0.500 L0.500 10.500" /></svg>
            </Tab>
            <TabRest />
          </TabStrip>
          <Board>
            <Rows>
              <Row $h={445}>
                <Widget title="Appliance Licenses"><Licenses /></Widget>
                <Widget title="Topology" w={978} pl={8}><TopologyMap /></Widget>
                <Widget title="Overlay Bandwidth" pl={8}><BandwidthPie /></Widget>
                <Widget title="Top Talkers"><BarList rows={TALKERS} ls={-0.027} /></Widget>
                <Widget title="Domains" h={41} extra={<Buttons ml={16} items={SRC} />}><BarList rows={DOMAINS} /></Widget>
              </Row>
              <Row $h={446}>
                <Widget title="Applications"><BarList rows={APPS} /></Widget>
                <Widget title="Countries" h={41} extra={<Buttons ml={15} items={SRC} />}><BarList rows={COUNTRIES} ls={-0.01} /></Widget>
                <Widget
                  title="Health Map"
                  w={1497}
                  h={41}
                  extra={
                    <>
                      <Hint $ml={14}>Show</Hint>
                      <Buttons ml={7} items={[["Alarms", 67], ["Loss", 53], ["Latency", 72], ["Jitter", 56], ["MOS", 55]]} on={[0, 1, 2, 3, 4]} />
                      <Hint $ml={32}>Sort</Hint>
                      <Buttons ml={6} items={[["Weekly Health", 112], ["Daily Health", 99], ["Hourly Health", 107], ["Tree", 54]]} on={[0]} />
                    </>
                  }
                >
                  <HealthMap />
                </Widget>
                <Widget title="Ports" h={41} extra={<Buttons ml={15} items={SRC} />}><BarList rows={PORTS} ls={-0.016} /></Widget>
              </Row>
              <Row $h={446}>
                <Widget title="Loss" extra={<Buttons ml={13} items={OV} on={[0]} />}><BarList rows={LOSS} ls={0} /></Widget>
                <Widget title="Jitter" extra={<Buttons ml={13} items={OV} on={[0]} />}><BarList rows={JITTER} ls={-0.003} /></Widget>
                <Widget title="Latency" extra={<Buttons ml={14} items={OV} on={[0]} />}><BarList rows={LATENCY} ls={-0.001} /></Widget>
                <Widget title={<>Flow Counts <small>(Active Current)</small></>} h={41}><BarList rows={FLOWS} ls={-0.012} /></Widget>
                <Widget title="Overlay-Transport" h={42} extra={<><Buttons ml={18} items={IO} on={[0]} /><Buttons ml={20} items={[["Flip", 39]]} /></>}>
                  <DualPie transport labels={T_LABELS} offset={27} groups={T_GROUPS} thumb={326} />
                </Widget>
                <Widget title="Overlay-Interface" h={42} extra={<><Buttons ml={17} items={IO} on={[0]} /><Buttons ml={20} items={[["Flip", 39]]} /></>}>
                  <DualPie labels={I_LABELS} offset={540} groups={I_GROUPS} thumb={350} />
                </Widget>
              </Row>
            </Rows>
            <Tools>
              <Range $w={35} $off>1hr</Range>
              <Range $w={36}>4hr</Range>
              <Range $w={30}>1d</Range>
              <Range $w={29}>7d</Range>
              <RefreshBtn>
                <svg width="12" height="14" viewBox="0 0 12 14" fill="none" stroke="#777" strokeWidth="1.800"><path d="M10.500 6.500 A4.600 4.600 0 1 1 6 3.800 L9.500 3.800 M6.500 0.800 L9.800 3.800 L6.500 6.800" /></svg>
              </RefreshBtn>
              <Gear size={22} />
              <Help>?</Help>
            </Tools>
          </Board>
          <Footer>©2022 Silver Peak Systems, Inc. <span>End User License Agreement</span></Footer>
        </Main>
      </Body>
    </Page>
  );
}
